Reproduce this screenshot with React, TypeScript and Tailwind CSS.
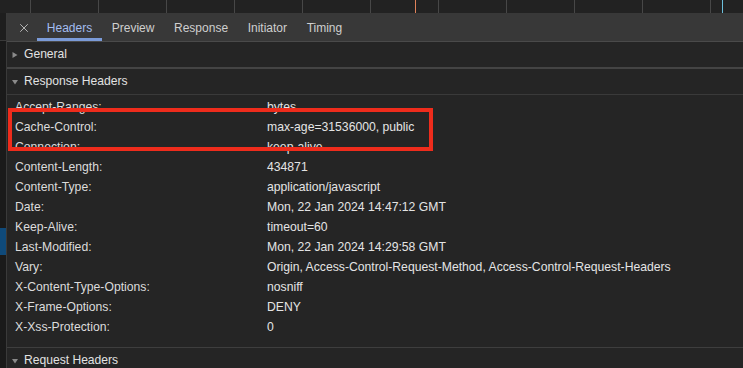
import { X } from "lucide-react";

const rows: [string, string][] = [
  ["Accept-Ranges:", "bytes"],
  ["Cache-Control:", "max-age=31536000, public"],
  ["Connection:", "keep-alive"],
  ["Content-Length:", "434871"],
  ["Content-Type:", "application/javascript"],
  ["Date:", "Mon, 22 Jan 2024 14:47:12 GMT"],
  ["Keep-Alive:", "timeout=60"],
  ["Last-Modified:", "Mon, 22 Jan 2024 14:29:58 GMT"],
  ["Vary:", "Origin, Access-Control-Request-Method, Access-Control-Request-Headers"],
  ["X-Content-Type-Options:", "nosniff"],
  ["X-Frame-Options:", "DENY"],
  ["X-Xss-Protection:", "0"],
];

const tabs = ["Headers", "Preview", "Response", "Initiator", "Timing"];

function Arrow({ open }: { open?: boolean }) {
  return (
    <svg width="6" height="6" viewBox="0 0 6 6" className="shrink-0">
      {open ? <path d="M0 1 L6 1 L3 5.5 Z" fill="#8a8a8a" /> : <path d="M0.5 0 L5.5 3 L0.5 6 Z" fill="#8a8a8a" />}
    </svg>
  );
}

function Section({ title, open }: { title: string; open?: boolean }) {
  return (
    <div className="flex shrink-0 items-center h-[25px] pl-[5px] gap-[6px] text-[12.1px] text-[#e2e2e2]">
      <Arrow open={open} />
      <span>{title}</span>
    </div>
  );
}

export default function App() {
  return (
    <div
      className="relative w-[743px] h-[368px] overflow-hidden bg-[#1b1b1b] flex flex-col"
      style={{ fontFamily: '"Liberation Sans", Arial, sans-serif' }}
    >
      {/* timeline strip */}
      <div className="relative h-[13px] flex shrink-0 bg-[#222222]">
        <div className="w-[31px] shrink-0 border-r border-[#474747]" />
        {Array.from({ length: 10 }).map((_, i) => (
          <div key={i} className="w-[68px] shrink-0 border-r border-[#474747]" />
        ))}
        <div className="absolute left-[415px] top-0 h-full w-[1px] bg-[#e0825a]" />
        <div className="absolute left-[722px] top-0 h-full w-[1px] bg-[#6cc0dc]" />
      </div>

      <div className="flex flex-1 min-h-0">
        {/* left gutter */}
        <div className="relative w-[7px] shrink-0 bg-[#1a1a1a] border-r border-[#3a3a3a]">
          <div className="h-[28px] border-b border-[#3a3a3a] bg-[#1e1e1e]" />
          <div className="absolute left-0 top-[215px] w-[6px] h-[27px] bg-[#0f4a7a]" />
        </div>

        {/* main panel */}
        <div className="flex-1 flex flex-col overflow-hidden bg-[#252525]">
          <div className="h-[29px] shrink-0 flex items-stretch bg-[#383838] border-b border-[#4a4a4a]">
            <div className="w-[30px] flex items-center justify-center pl-[3px] pt-[2px]">
              <X size={14} strokeWidth={1.6} color="#bdbdbd" />
            </div>
            {tabs.map((t, i) => (
              <div
                key={t}
                className={
                  i === 0
                    ? "px-[9.8px] flex items-center text-[12px] text-[#a3bdf0] border-b-[3px] border-[#7b9bd8] pt-[4px]"
                    : "px-[9.8px] flex items-center text-[12px] text-[#cfcfcf] border-b-[3px] border-transparent pt-[4px]"
                }
              >
                {t}
              </div>
            ))}
          </div>

          <Section title="General" />
          <div className="h-[2px] shrink-0 bg-[#444444]" />
          <Section title="Response Headers" open />
          <div className="h-[1px] shrink-0 bg-[#3a3a3a]" />

          <div className="shrink-0 pt-[2px] pb-[10px] border-b border-[#3e3e3e]">
            {rows.map(([k, v]) => (
              <div key={k} className="h-[20px] flex items-center text-[12.2px] text-[#dcdcdc]">
                <span className="w-[260px] pl-[8px] shrink-0">{k}</span>
                <span className="whitespace-nowrap text-[#e4e4e4]">{v}</span>
              </div>
            ))}
          </div>

          <Section title="Request Headers" open />
        </div>
      </div>

      {/* annotation box */}
      <div className="absolute left-[8px] top-[108px] w-[425px] h-[43px] border-[4.5px] border-[#ee2c1c]" />
    </div>
  );
}
